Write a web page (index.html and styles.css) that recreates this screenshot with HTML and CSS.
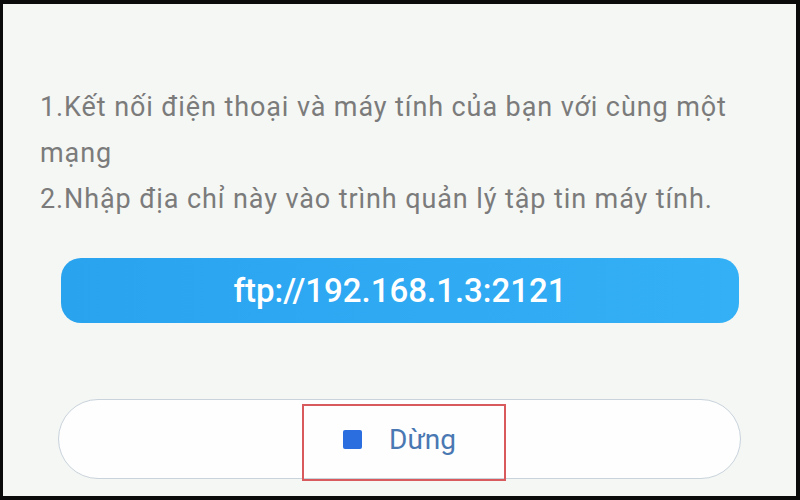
FILE: index.html
```html
<!DOCTYPE html>
<html lang="vi">
<head>
    <meta charset="UTF-8">
    <meta name="viewport" content="width=device-width, initial-scale=1.0">
    <title>FTP</title>
    <link rel="stylesheet" href="styles.css">
</head>
<body>
    <div class="screen">
        <div class="steps">
            <p>1.Kết nối điện thoại và máy tính của bạn với cùng một mạng</p>
            <p>2.Nhập địa chỉ này vào trình quản lý tập tin máy tính.</p>
        </div>
        <div class="address">ftp://192.168.1.3:2121</div>
        <button class="stop-btn">
            <span class="stop-icon"></span>
            <span class="stop-label">Dừng</span>
            <span class="highlight"></span>
        </button>
    </div>
</body>
</html>
```

FILE: styles.css
```css
* {
    margin: 0;
    padding: 0;
    box-sizing: border-box;
}
body {
    background: #0b0b0b;
    font-family: Roboto, "Noto Sans", Arial, sans-serif;
}
.screen {
    margin: 4px 4px 4px 3px;
    height: 492px;
    background: #f5f7f4;
    padding: 80px 0 0 0;
}
.steps {
    padding: 0 33px 0 37px;
    font-size: 27px;
    letter-spacing: 0.9px;
    line-height: 46px;
    color: #7b7b7b;
}
.address {
    margin: 36px 57px 0 58px;
    height: 65px;
    border-radius: 20px;
    background: linear-gradient(90deg, #2aa3ef, #34b0f6);
    color: #fff;
    font-size: 33px;
    font-weight: 500;
    display: flex;
    align-items: center;
    justify-content: center;
}
.stop-btn {
    position: relative;
    display: flex;
    align-items: center;
    justify-content: center;
    gap: 27px;
    margin: 76px 0 0 55px;
    width: 683px;
    height: 80px;
    border-radius: 40px;
    border: 1px solid #c9d3dc;
    background: #fdfefd;
    font-family: inherit;
}
.stop-icon {
    width: 19px;
    height: 19px;
    border-radius: 2px;
    background: #2b6ee0;
}
.stop-label {
    font-size: 28px;
    color: #4a78b3;
}
.highlight {
    position: absolute;
    left: 243px;
    top: 4px;
    width: 204px;
    height: 77px;
    border: 2px solid #d85a5c;
}
```
